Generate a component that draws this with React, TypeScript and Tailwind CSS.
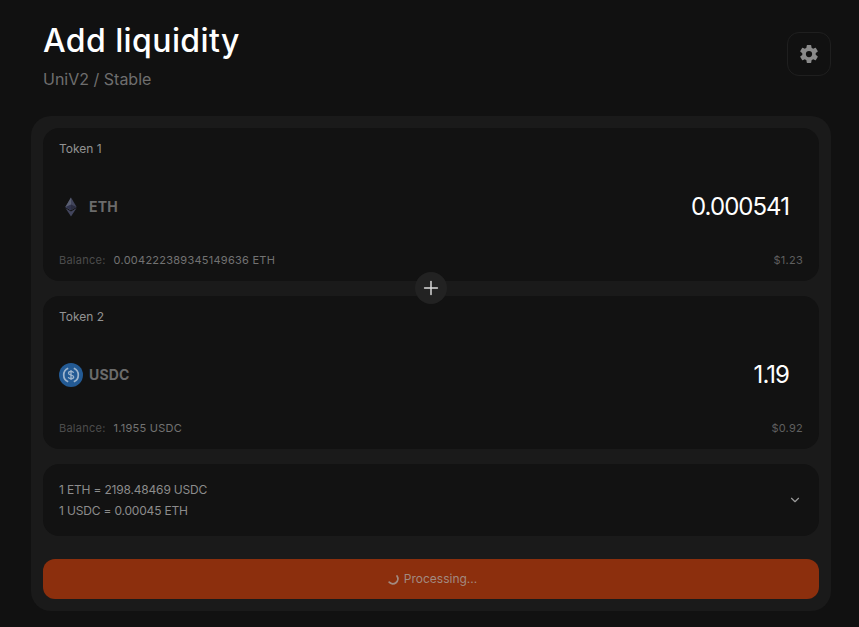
import { ChevronDown, Plus } from 'lucide-react'
import { IoSettingsSharp } from 'react-icons/io5'

const EthIcon = () => (
  <svg width="24" height="24" viewBox="0 0 24 24" className="opacity-60">
    <path d="M12 2.5 6.4 12 12 15.3 17.6 12z" fill="#62688f" />
    <path d="M12 2.5V15.3L6.4 12z" fill="#8a92b2" />
    <path d="M12 16.4 6.4 13.1 12 21.5 17.6 13.1z" fill="#62688f" />
    <path d="M12 9.5 6.4 12 12 15.3z" fill="#454a75" />
    <path d="M12 9.5 17.6 12 12 15.3z" fill="#3c3f5f" />
  </svg>
)

const UsdcIcon = () => (
  <svg width="24" height="24" viewBox="0 0 24 24">
    <circle cx="12" cy="12" r="12" fill="#235a94" />
    <path d="M9.2 5.2a7.4 7.4 0 0 0 0 13.6" fill="none" stroke="#9db4cc" strokeWidth="1.7" />
    <path d="M14.8 5.2a7.4 7.4 0 0 1 0 13.6" fill="none" stroke="#9db4cc" strokeWidth="1.7" />
    <path
      d="M14.6 9.9c-.3-1-1.2-1.5-2.6-1.5-1.5 0-2.5.7-2.5 1.8 0 2.6 5.2 1.2 5.2 3.7 0 1.1-1.1 1.8-2.7 1.8-1.5 0-2.5-.6-2.7-1.7M12 6.9v10.2"
      fill="none"
      stroke="#9db4cc"
      strokeWidth="1.3"
    />
  </svg>
)

const TokenCard = ({ label, icon, symbol, amount, balance, usd }: any) => {
  return (
    <div className="h-[153px] rounded-2xl bg-[#121212] px-4 pt-[13px] pb-[13px] flex flex-col justify-between">
      <p className="text-[12px] leading-4 text-[#929292]">{label}</p>
      <div className="mt-[4px] flex flex-row items-center justify-between pr-[14px]">
        <div className="flex flex-row items-center gap-[6px]">
          {icon}
          <span className="text-[14px] font-bold tracking-[0.2px] text-[#6b6b6b]">{symbol}</span>
        </div>
        <span className="text-[24px] leading-8 tracking-[-0.04em] text-white">{amount}</span>
      </div>
      <div className="flex flex-row items-center justify-between text-[11px] leading-4 tracking-[0.25px]">
        <p className="flex flex-row gap-[8px]">
          <span className="text-[#4c4c4c]">Balance:</span>
          <span className="text-[#727272]">{balance}</span>
        </p>
        <span className="text-[#5f5f5f]">{usd}</span>
      </div>
    </div>
  )
}

export default function App() {
  return (
    <div className="h-[627px] w-full bg-[#111111] px-[28px] pt-[16px] font-['Inter',sans-serif] overflow-hidden">
      <div className="flex flex-row items-start justify-between pl-[15px] pt-[16px]">
        <div>
          <h1 className="text-[32px] leading-8 -mt-[7px] font-medium tracking-[0.4px] text-white">Add liquidity</h1>
          <p className="mt-[10px] text-[16px] leading-6 text-[#6e6e6e]">UniV2 / Stable</p>
        </div>
        <button className="h-11 w-11 rounded-xl border border-[#1f1f1f] flex items-center justify-center text-[#8a8a8a]">
          <IoSettingsSharp size={20} />
        </button>
      </div>

      <div className="mt-[25px] ml-[3px] rounded-[20px] bg-[#1a1a1a] p-3 flex flex-col">
        <div className="relative flex flex-col gap-[15px]">
          <TokenCard
            label="Token 1"
            icon={<EthIcon />}
            symbol="ETH"
            amount="0.000541"
            balance="0.004222389345149636 ETH"
            usd="$1.23"
          />
          <div className="absolute left-[372px] top-[144px] h-8 w-8 rounded-full bg-[#222222] flex items-center justify-center text-[#dcdcdc]">
            <Plus size={22} strokeWidth={1.6} />
          </div>
          <TokenCard
            label="Token 2"
            icon={<UsdcIcon />}
            symbol="USDC"
            amount="1.19"
            balance="1.1955 USDC"
            usd="$0.92"
          />
          <div className="h-[72px] rounded-2xl bg-[#121212] px-4 flex flex-row items-center justify-between">
            <div className="text-[12px] leading-[21px] tracking-[-0.18px] text-[#8c8c8c]">
              <p>1 ETH = 2198.48469 USDC</p>
              <p>1 USDC = 0.00045 ETH</p>
            </div>
            <ChevronDown size={14} className="mr-px text-[#9a9a9a]" />
          </div>
        </div>
        <button className="mt-[23px] h-10 rounded-xl bg-[#8c2f0d] flex flex-row items-center justify-center gap-[3px] text-[12px] text-[#a28a80]">
          <svg width="16" height="16" viewBox="0 0 16 16" fill="none">
            <path d="M12 5A5 5 0 0 1 4.2 11.2" stroke="#a28a80" strokeWidth="1.8" strokeLinecap="round" />
          </svg>
          Processing...
        </button>
      </div>
    </div>
  )
}
